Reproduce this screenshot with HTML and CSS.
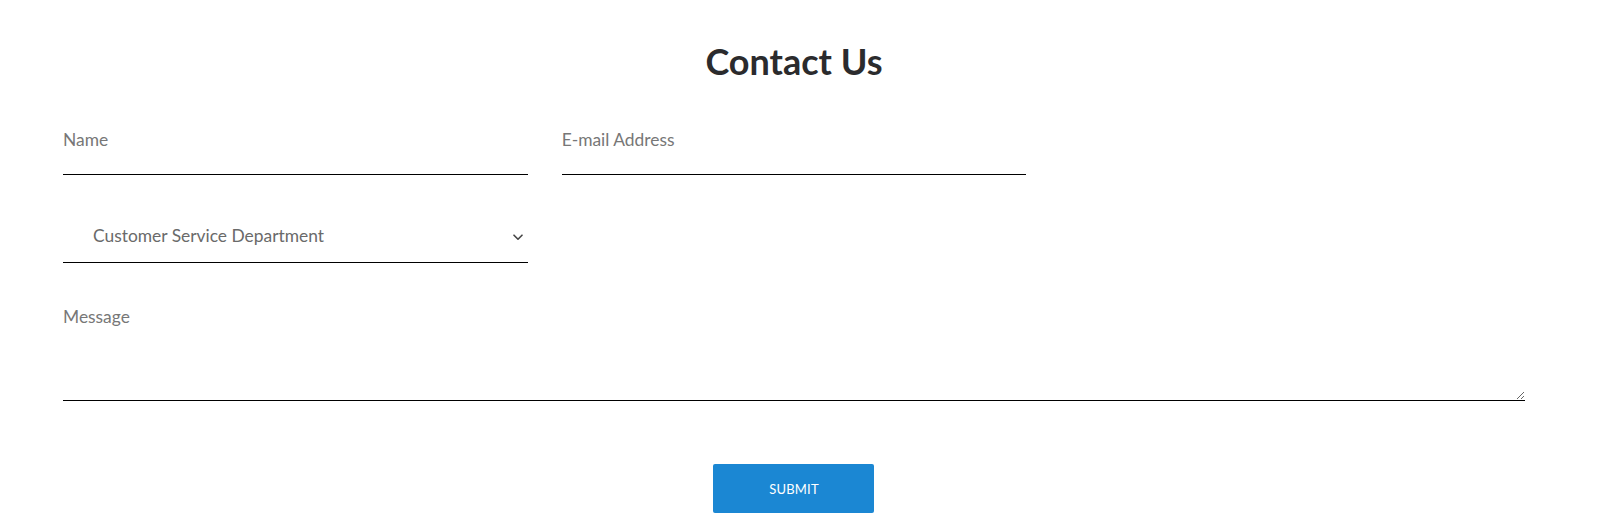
FILE: index.html
```html
<!DOCTYPE html>
<html lang="en">
<head>
<meta charset="utf-8">
<title>Contact Us</title>
<link rel="stylesheet" href="styles.css">
</head>
<body>
<main class="page">
  <h1 class="title">Contact Us</h1>
  <form class="contact-form">
    <input class="field" type="text" placeholder="Name">
    <input class="field" type="email" placeholder="E-mail Address">
    <div class="select-wrap">
      <select class="select">
        <option>Customer Service Department</option>
        <option>Sales Department</option>
        <option>Technical Support</option>
      </select>
      <svg class="chevron" width="10" height="7" viewBox="0 0 10 7" aria-hidden="true">
        <path d="M1 1.2 L5 5.2 L9 1.2" fill="none" stroke="#444" stroke-width="1.6" stroke-linecap="round" stroke-linejoin="round"/>
      </svg>
    </div>
    <textarea class="message" placeholder="Message"></textarea>
    <div class="actions">
      <button class="submit" type="submit">SUBMIT</button>
    </div>
  </form>
</main>
</body>
</html>
```

FILE: styles.css
```css
html, body {
  margin: 0;
  background: #ffffff;
}

body {
  font-family: "Lato", "Noto Sans", sans-serif;
  color: #2a2a2a;
}

.page {
  padding: 0 79px 0 63px;
}

.title {
  margin: 39px 0 0;
  font-family: "Lato", sans-serif;
  font-weight: 700;
  font-size: 36px;
  line-height: 44px;
  text-align: center;
  color: #2b2b2d;
}

.contact-form {
  margin-top: 37px;
  display: grid;
  grid-template-columns: repeat(3, 1fr);
  column-gap: 34px;
}

.field,
.select,
.message {
  font-family: "Lato", sans-serif;
  font-size: 17.4px;
  color: #555;
  background: transparent;
  border: none;
  border-bottom: 1px solid #000;
  border-radius: 0;
  outline: none;
  box-sizing: border-box;
  width: 100%;
  margin: 0;
}

.field {
  height: 55px;
  padding: 0 0 15px 0;
}

.field::placeholder,
.message::placeholder {
  color: #777;
  opacity: 1;
}

.select-wrap {
  grid-column: 1;
  margin-top: 38px;
  position: relative;
}

.select {
  appearance: none;
  -webkit-appearance: none;
  height: 50px;
  padding: 0 30px 3px;
  line-height: 46px;
  color: #6a6a6a;
  cursor: pointer;
}

.chevron {
  position: absolute;
  right: 5px;
  top: 21px;
  pointer-events: none;
}

.message {
  grid-column: 1 / -1;
  margin-top: 37px;
  height: 101px;
  padding: 7px 0 0;
  line-height: 20px;
  resize: vertical;
  display: block;
}

.actions {
  grid-column: 1 / -1;
  display: flex;
  justify-content: center;
  margin-top: 63px;
}

.submit {
  width: 161px;
  height: 49px;
  border: none;
  border-radius: 2px;
  background: #1b87d3;
  color: #ffffff;
  font-family: "Lato", sans-serif;
  font-size: 13px;
  letter-spacing: 0.2px;
  cursor: pointer;
}
```
